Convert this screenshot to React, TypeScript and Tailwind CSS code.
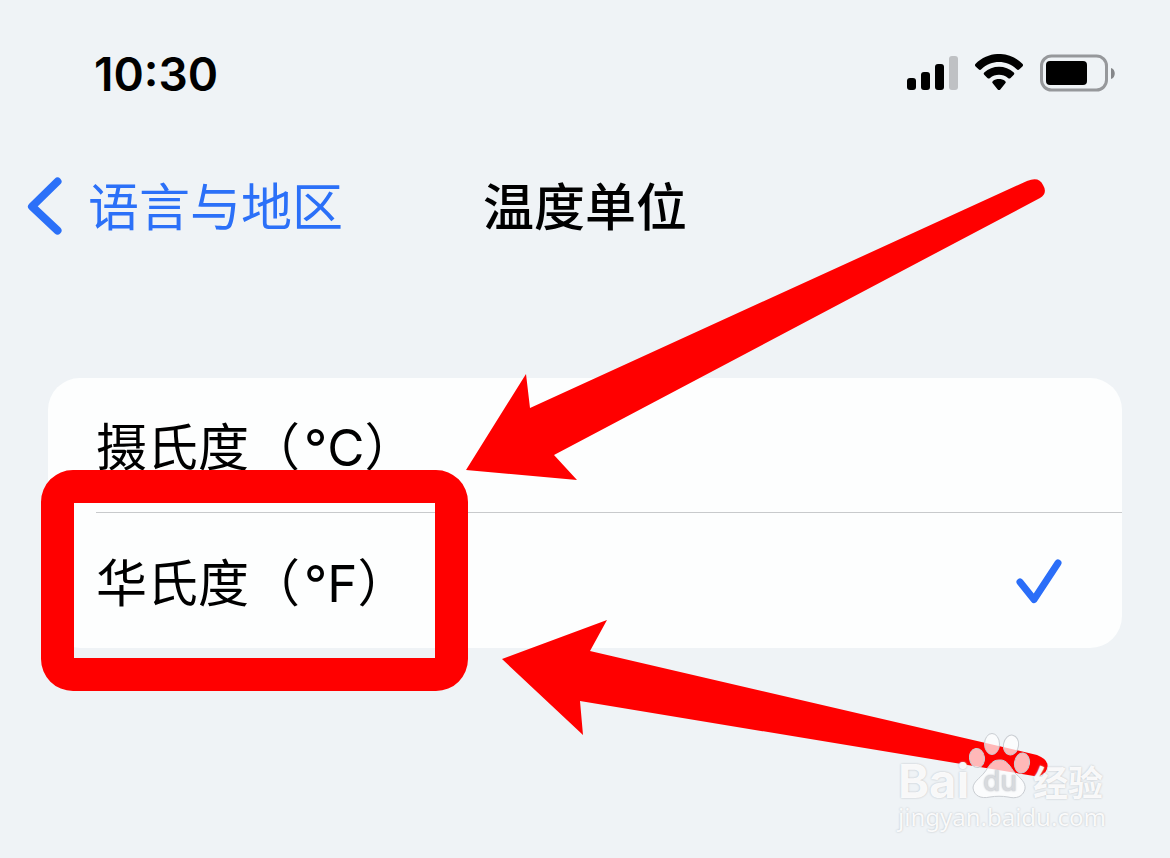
import { useState } from "react";

const units = [
  { id: "celsius", name: "摄氏度", symbol: "°C" },
  { id: "fahrenheit", name: "华氏度", symbol: "°F" },
];

function StatusBar() {
  return (
    <div className="flex h-[146px] items-center justify-between pl-[94px] pr-[54px]">
      <time className="pt-0.5 text-[46px] font-semibold leading-[56px]">10:30</time>
      <div className="flex items-center gap-4">
        <svg width="52" height="38" viewBox="0 0 52 38" role="img" aria-label="Signal">
          <rect x="1" y="24" width="9" height="12" rx="3" />
          <rect x="15" y="18" width="9" height="18" rx="3" />
          <rect x="29" y="10" width="9" height="26" rx="3" />
          <rect x="43" y="2" width="9" height="34" rx="3" fill="#bfc1c4" />
        </svg>
        <svg width="50" height="38" viewBox="0 0 50 38" role="img" aria-label="Wi-Fi">
          <path d="M1.6 12.4Q.2 11 1.6 9.7C15-3.3 35-3.3 48.4 9.7Q49.8 11 48.4 12.4L45.4 15.3Q44 16.5 42.7 15.3C32.5 5.7 17.5 5.7 7.3 15.3Q6 16.5 4.6 15.3Z" />
          <path d="M10.2 20.8Q9 19.6 10.2 18.4C18.5 10.7 31.5 10.7 39.8 18.4Q41 19.6 39.8 20.8L36.6 23.9Q35.2 25.1 34 24C29 19.6 21 19.6 16 24Q14.8 25.1 13.4 23.9Z" />
          <path d="M18.7 29.2Q17.5 28 18.9 26.9C22.4 24.3 27.6 24.3 31.1 26.9Q32.5 28 31.3 29.2L26.3 35.4Q25 36.6 23.7 35.4Z" />
        </svg>
        <svg width="76" height="38" viewBox="0 0 76 38" role="img" aria-label="Battery">
          <rect x="1.5" y="2" width="65" height="34" rx="10" fill="none" stroke="#96989b" strokeWidth="3" />
          <rect x="6" y="7" width="41" height="24" rx="4" />
          <path d="M71 14C76 15 76 24 71 25Z" fill="#85878a" />
        </svg>
      </div>
    </div>
  );
}

function NavBar() {
  return (
    <header className="grid h-[120px] grid-cols-[1fr_auto_1fr] items-center px-[26px]">
      <a href="#language" className="flex items-center gap-[25px] text-[51px] font-normal leading-[60px] text-[#2b70f8]">
        <svg width="37" height="60" viewBox="0 0 37 60" fill="none" stroke="currentColor" strokeWidth="8" strokeLinecap="round" strokeLinejoin="round" aria-hidden="true">
          <path d="M31.500 5.500L6 30.500L31.500 54.500" />
        </svg>
        <span className="pt-1">语言与地区</span>
      </a>
      <h1 className="pt-1 text-[51px] font-medium leading-[60px]">温度单位</h1>
    </header>
  );
}

function Annotations() {
  return (
    <div className="pointer-events-none absolute left-0 top-0" aria-hidden="true">
      <div className="absolute left-[41px] top-[470px] h-[221px] w-[427px] rounded-[32px] border-[33px] border-[#ff0000]" />
      <svg className="absolute left-0 top-0 max-w-none" width="1170" height="858" viewBox="0 0 1170 858" fill="#ff0000">
        <path d="M466 470L526 374L530 408L1027 181Q1039 176 1043 185Q1048 193 1040 198L554 455L577 480Z" />
        <path d="M502 659L607 620L590 651L1037 755Q1050 760 1047 769Q1044 777 1034 776L580 701L583 735Z" />
      </svg>
    </div>
  );
}

function Watermark() {
  return (
    <div className="pointer-events-none absolute bottom-[27px] right-[64px] w-[208px] text-white/90 [text-shadow:0_0_2px_#b4b8bd]">
      <div className="relative flex h-[72px] items-start justify-between pt-[28px] font-bold">
        <span className="text-[47px] leading-[44px]">Bai</span>
        <svg className="absolute left-[71px] top-0" width="64" height="72" viewBox="0 0 64 72" fill="#fff" fillOpacity=".72" stroke="#c9cdd2" strokeWidth="1" aria-hidden="true">
          <ellipse cx="8" cy="27" rx="7.500" ry="9.500" transform="rotate(-8 8 27)" />
          <ellipse cx="23" cy="13" rx="7.500" ry="10.500" />
          <ellipse cx="42" cy="14" rx="7.500" ry="10" transform="rotate(10 42 14)" />
          <ellipse cx="53" cy="32" rx="7.500" ry="10" transform="rotate(8 53 32)" />
          <path d="M30 29C38 28 41 36 46 42C51 47 57 51 56 58C54 66 47 68 39 66C33 65 27 65 21 66C12 68 5 65 4 57C4 51 11 47 15 42C20 36 22 29 30 29Z" />
        </svg>
        <span className="absolute left-[85px] top-[34px] text-[28px] font-medium leading-[32px] text-[#d8dade]">du</span>
        <span className="pr-[3px] pt-1 text-[35px] leading-[40px]">经验</span>
      </div>
      <div className="whitespace-nowrap font-['Noto_Sans',sans-serif] text-[24px] leading-[28px]">jingyan.baidu.com</div>
    </div>
  );
}

export default function App() {
  const [selected, setSelected] = useState("fahrenheit");

  return (
    <div className="relative min-h-screen overflow-hidden bg-[#eff3f6] font-['Inter','Noto_Sans_CJK_SC',sans-serif] text-black" lang="zh-CN">
      <StatusBar />
      <NavBar />
      <main className="px-12 pt-28">
        <div role="radiogroup" aria-label="温度单位" className="overflow-hidden rounded-[32px] bg-[#fdfefe]">
          {units.map((unit) => (
            <label key={unit.id} className="group flex h-[135px] cursor-pointer items-stretch pl-12">
              <input
                type="radio"
                name="unit"
                className="sr-only"
                checked={selected === unit.id}
                onChange={() => setSelected(unit.id)}
              />
              <span className="flex flex-1 items-center justify-between border-b border-[#c8cacc] pr-[60px] text-[51px] font-normal leading-[60px] group-last:border-b-0">
                <span className="pt-1.5">
                  {unit.name}（<span className="pl-1">{unit.symbol}</span>）
                </span>
                {selected === unit.id && (
                  <svg width="46" height="46" viewBox="0 0 46 46" fill="none" stroke="#2b6ef8" strokeWidth="7" strokeLinecap="round" strokeLinejoin="round" aria-hidden="true">
                    <path d="M4 24L18 41.500L42 5" />
                  </svg>
                )}
              </span>
            </label>
          ))}
        </div>
      </main>
      <Annotations />
      <Watermark />
    </div>
  );
}
